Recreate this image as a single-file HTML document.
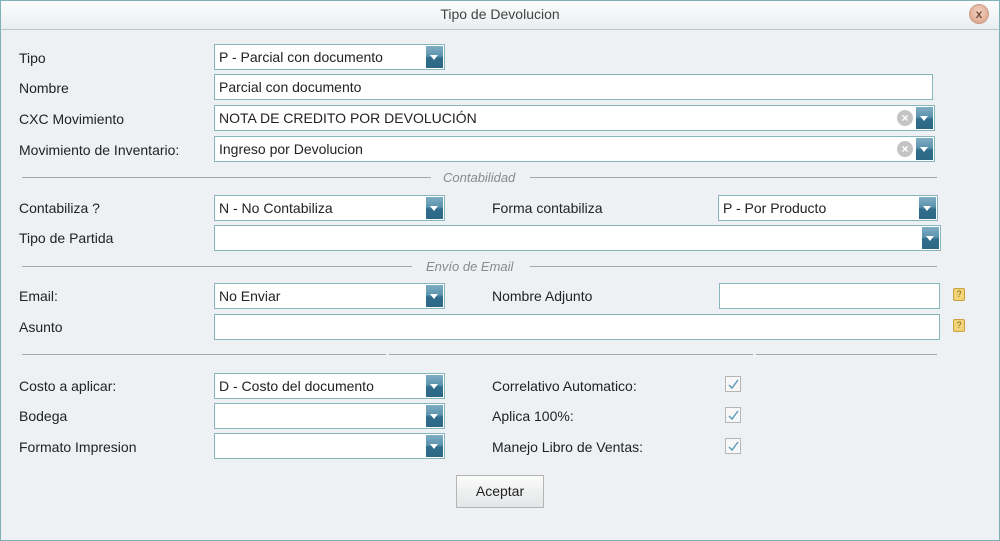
<!DOCTYPE html>
<html><head><meta charset="utf-8"><style>
*{box-sizing:border-box;margin:0;padding:0}
body{width:1000px;height:541px;overflow:hidden;background:#edf1f4;font-family:"Liberation Sans",Tahoma,sans-serif;font-size:14px;color:#222}
#win{position:absolute;left:0;top:0;width:1000px;height:541px;background:#edf1f4}
#bd{position:absolute;left:0;top:0;width:1000px;height:541px;border:1px solid #7fb0b6;z-index:5;pointer-events:none}
#title{position:absolute;left:0;top:0;width:1000px;height:30px;background:linear-gradient(#fdfdfd,#e9eef0);border-bottom:1px solid #b7c9cc;text-align:center;line-height:29px;color:#444;font-size:14px}
#close{position:absolute;left:969px;top:4px;width:20px;height:20px;border-radius:50%;background:radial-gradient(circle at 50% 40%,#f4d7c8,#d9977c);border:1px solid #caa28c;color:#7a4a3a;font-size:12px;line-height:18px;text-align:center;font-weight:bold}
.l{position:absolute;left:19px;line-height:16px}
.f{position:absolute;background:#fff;border:1px solid #86b5bc;height:26px;padding-left:4px;line-height:24px;white-space:nowrap;overflow:hidden}
.dd{position:absolute;right:1px;top:1px;width:17px;height:22px;background:linear-gradient(#80aec4 0%,#5b93ad 45%,#2f6d8b 55%,#2c6886 100%)}
.dd:after{content:"";position:absolute;left:4px;top:9px;border-left:4.5px solid transparent;border-right:4.5px solid transparent;border-top:5px solid #fff}
.x{position:absolute;right:21px;top:4px;width:16px;height:16px;border-radius:50%;background:#c4c4c4;color:#fff;font-size:12px;line-height:16px;text-align:center;font-weight:bold}
.sep{position:absolute;height:1px;background:#a7a7a7}
.st{position:absolute;color:#8a8a8a;font-style:italic;font-size:13px}
.cb{position:absolute;width:16px;height:16px;border:1px solid #b6b6b6;background:#f7f7f7}
.cb svg{position:absolute;left:1px;top:1px}
.ic{position:absolute;width:12px;height:13px;background:#f1d37a;border:1px solid #c9a23c;border-radius:2px;font-size:9px;line-height:10px;text-align:center;color:#8a6a10}
#btn{position:absolute;left:456px;top:475px;width:88px;height:33px;border:1px solid #b4b4b4;background:linear-gradient(#fbfbfb,#e3e6e7);text-align:center;line-height:31px}
</style></head><body><div id="win">
<div id="title">Tipo de Devolucion</div><div id="close">x</div>

<div class="l" style="top:50px">Tipo</div>
<div class="f" style="left:214px;top:44px;width:231px">P - Parcial con documento<div class="dd"></div></div>
<div class="l" style="top:80px">Nombre</div>
<div class="f" style="left:214px;top:74px;width:719px">Parcial con documento</div>
<div class="l" style="top:111px">CXC Movimiento</div>
<div class="f" style="left:214px;top:105px;width:721px">NOTA DE CREDITO POR DEVOLUCIÓN<div class="x">×</div><div class="dd"></div></div>
<div class="l" style="top:142px">Movimiento de Inventario:</div>
<div class="f" style="left:214px;top:136px;width:721px">Ingreso por Devolucion<div class="x">×</div><div class="dd"></div></div>

<div class="sep" style="left:22px;top:177px;width:409px"></div>
<div class="st" style="left:443px;top:170px">Contabilidad</div>
<div class="sep" style="left:530px;top:177px;width:407px"></div>

<div class="l" style="top:200px">Contabiliza ?</div>
<div class="f" style="left:214px;top:195px;width:231px">N - No Contabiliza<div class="dd"></div></div>
<div class="l" style="left:492px;top:200px">Forma contabiliza</div>
<div class="f" style="left:718px;top:195px;width:220px">P - Por Producto<div class="dd"></div></div>
<div class="l" style="top:230px">Tipo de Partida</div>
<div class="f" style="left:214px;top:225px;width:727px"><div class="dd"></div></div>

<div class="sep" style="left:22px;top:266px;width:390px"></div>
<div class="st" style="left:426px;top:259px">Envío de Email</div>
<div class="sep" style="left:530px;top:266px;width:407px"></div>

<div class="l" style="top:288px">Email:</div>
<div class="f" style="left:214px;top:283px;width:231px">No Enviar<div class="dd"></div></div>
<div class="l" style="left:492px;top:288px">Nombre Adjunto</div>
<div class="f" style="left:719px;top:283px;width:221px"></div>
<div class="ic" style="left:953px;top:288px">?</div>
<div class="l" style="top:319px">Asunto</div>
<div class="f" style="left:214px;top:314px;width:726px"></div>
<div class="ic" style="left:953px;top:319px">?</div>

<div class="sep" style="left:22px;top:354px;width:364px"></div>
<div class="sep" style="left:389px;top:354px;width:364px"></div>
<div class="sep" style="left:756px;top:354px;width:181px"></div>

<div class="l" style="top:378px">Costo a aplicar:</div>
<div class="f" style="left:214px;top:373px;width:231px">D - Costo del documento<div class="dd"></div></div>
<div class="l" style="left:492px;top:378px">Correlativo Automatico:</div>
<div class="cb" style="left:725px;top:376px"><svg width="13" height="13"><path d="M2 7 L5 10 L11 2" stroke="#5a9ab8" stroke-width="1.4" fill="none"/></svg></div>
<div class="l" style="top:408px">Bodega</div>
<div class="f" style="left:214px;top:403px;width:231px"><div class="dd"></div></div>
<div class="l" style="left:492px;top:408px">Aplica 100%:</div>
<div class="cb" style="left:725px;top:407px"><svg width="13" height="13"><path d="M2 7 L5 10 L11 2" stroke="#5a9ab8" stroke-width="1.4" fill="none"/></svg></div>
<div class="l" style="top:439px">Formato Impresion</div>
<div class="f" style="left:214px;top:433px;width:231px"><div class="dd"></div></div>
<div class="l" style="left:492px;top:439px">Manejo Libro de Ventas:</div>
<div class="cb" style="left:725px;top:438px"><svg width="13" height="13"><path d="M2 7 L5 10 L11 2" stroke="#5a9ab8" stroke-width="1.4" fill="none"/></svg></div>

<div id="btn">Aceptar</div>
</div><div id="bd"></div></body></html>
